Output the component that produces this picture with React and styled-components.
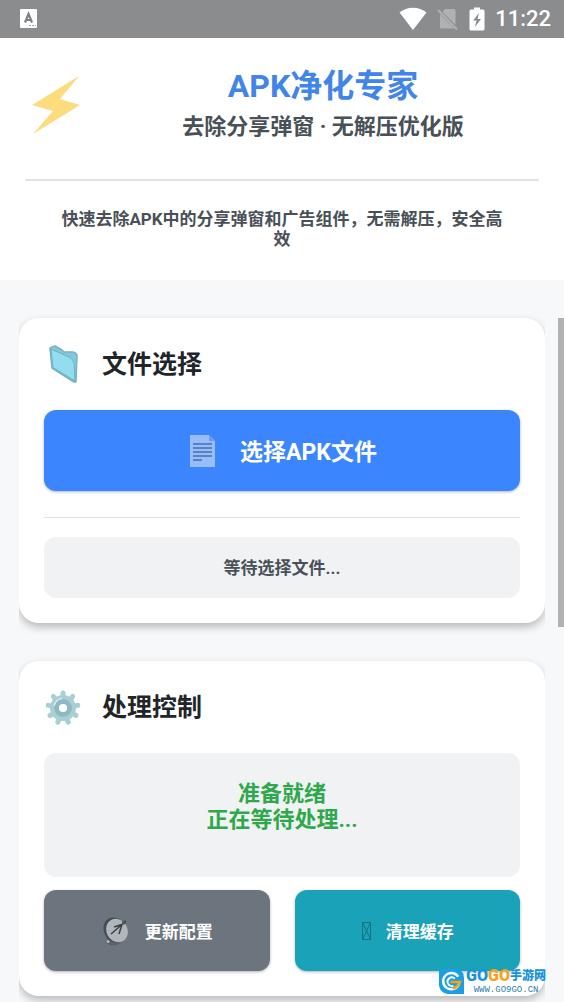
import React from 'react';
import styled, { createGlobalStyle } from 'styled-components';

const GlobalStyle = createGlobalStyle`
* {
    box-sizing: border-box;
    margin: 0;
    padding: 0;
}

body {
    background: #f7f8fa;
    font-family: Roboto, "Noto Sans CJK SC", sans-serif;
    font-weight: 700;
}

svg {
    display: block;
    flex: none;
}
`

const gearTeeth = [0, 40, 80, 120, 160, 200, 240, 280, 320];

const AppIcon = () => (
    <svg width="18" height="20" viewBox="0 0 18 20">
        <rect x="0" y="0" width="17" height="19" rx="1" fill="#fff" />
        <path d="M5 13.500 L8.500 5 L12 13.500 M6 11 H11" fill="none" stroke="#7f8082" strokeWidth="2.200" />
        <path d="M9 16.500 H16" stroke="#a5a6a8" strokeDasharray="2 1" />
    </svg>
);

const WifiIcon = () => (
    <svg width="28" height="24" viewBox="0 0 28 24">
        <path d="M14 23 L0.500 5.500 C8 -0.800 20 -0.800 27.500 5.500 Z" fill="#fff" />
    </svg>
);

const NoSimIcon = () => (
    <svg width="22" height="24" viewBox="0 0 22 24">
        <path d="M8 2 H17 Q18.500 2 18.500 3.500 V18 L5.500 5 Z M3 7 L17.500 21.500 H4 Q3 21.500 3 20.500 Z" fill="#b0b1b2" />
        <path d="M1 3 L20 22.500" stroke="#b0b1b2" strokeWidth="1.800" />
    </svg>
);

const BatteryIcon = () => (
    <svg width="16" height="24" viewBox="0 0 16 24">
        <path d="M5 0.500 H11 V2.500 H14 Q15.500 2.500 15.500 4 V22 Q15.500 23.500 14 23.500 H2 Q0.500 23.500 0.500 22 V4 Q0.500 2.500 2 2.500 H5 Z" fill="#fff" />
        <path d="M10 6 L4 13.500 H7.500 L6 20 L12 12 H8.500 Z" fill="#8b8c8e" />
    </svg>
);

const BoltIcon = () => (
    <svg width="62" height="60" viewBox="0 0 62 60">
        <path d="M54 2 L35 25 L55 31 L8 60 L28 37 L7 31 Z" fill="#fcdc7d" />
    </svg>
);

const FolderIcon = () => (
    <svg width="38" height="42" viewBox="0 0 38 42">
        <path d="M6 5 L11 3 L18 7 L20 9 L29 9 Q33 10 33 13 L32 39 L30 39 L8 25 Z" fill="#7fc9dc" stroke="#7fb0bf" strokeWidth="1.500" strokeLinejoin="round" />
        <path d="M7 6 L25 14 Q29 16 30 20 L31 38 L9 24.500 Z" fill="#92ddf0" stroke="#72afc2" />
    </svg>
);

const GearIcon = () => (
    <svg width="38" height="42" viewBox="0 0 38 42">
        <g stroke="#a8cfd3" strokeWidth="5" strokeLinecap="round">
            {gearTeeth.map((a) => (
                <path key={a} d="M19 12 V7" transform={`rotate(${a} 19 22)`} />
            ))}
        </g>
        <circle cx="19" cy="22" r="13" fill="#a8cfd3" />
        <circle cx="19" cy="22" r="6.500" fill="none" stroke="#8fb9c0" strokeWidth="5" />
        <path d="M10 20 Q12 13 18 12.500" fill="none" stroke="#d5eaec" strokeWidth="1.500" />
        <circle cx="19" cy="22" r="4" fill="#fff" />
    </svg>
);

const DocIcon = () => (
    <svg width="33" height="34" viewBox="0 0 33 34">
        <path d="M3 2 H22 L28 8 V34 H3 Z" fill="#98bdf9" />
        <path d="M22 2 V8 H28 Z" fill="#6f9ce6" />
        <path d="M6 11 H25 M6 15 H25 M6 19 H25 M6 23 H25 M6 27 H15" stroke="#476eb4" strokeWidth="1.500" />
    </svg>
);

const DishIcon = () => (
    <svg width="30" height="32" viewBox="0 0 30 32">
        <path d="M6 22 L5 28 Q12 33 20 28 L17 23 Z" fill="#59616a" />
        <ellipse cx="14" cy="15" rx="11" ry="13" transform="rotate(-30 14 15)" fill="#434b53" />
        <ellipse cx="16" cy="15.500" rx="10.500" ry="12" transform="rotate(-30 16 15.500)" fill="#b1b6ba" />
        <path d="M10 19 L25 6 M13 12 L21 9.500 L18 19" fill="none" stroke="#394047" strokeWidth="1.500" />
        <circle cx="23" cy="7.500" r="2" fill="#4d555d" />
        <circle cx="7" cy="26.500" r="1.500" fill="#b1b6ba" />
    </svg>
);

const MissingIcon = () => (
    <svg width="11" height="20" viewBox="0 0 11 20">
        <path d="M1.500 1.500 H9.500 V18.500 H1.500 Z L9.500 18.500 M9.500 1.500 L1.500 18.500" fill="none" stroke="#11747f" />
    </svg>
);

const LogoIcon = () => (
    <svg width="25" height="25" viewBox="0 0 26 26">
        <path d="M0 0 H18 Q26 1 26 9 V26 H9 Q1 25 0 17 Z" fill="#1b9ee2" />
        <path d="M20 8 A8.500 8.500 0 1 0 21 15" fill="none" stroke="#fff" strokeWidth="2.500" />
        <path d="M16.500 10 A4.500 4.500 0 1 0 15 17.500" fill="none" stroke="#fff" strokeWidth="2" />
        <path d="M12 13.500 H22 Q20 19 14 20" fill="none" stroke="#f7a21b" strokeWidth="2.500" />
    </svg>
);

const App = () => {
    return (
        <Page>
            <GlobalStyle />

            <StatusBar>
                <AppIcon />
                <StatusIcons>
                    <WifiIcon />
                    <NoSimIcon />
                    <BatteryIcon />
                    <Time>11:22</Time>
                </StatusIcons>
            </StatusBar>

            <Header>
                <HeaderRow>
                    <BoltIcon />
                    <Titles>
                        <Title>APK净化专家</Title>
                        <Subtitle>去除分享弹窗 · 无解压优化版</Subtitle>
                    </Titles>
                </HeaderRow>
                <Divider $size={2} />
                <Description>快速去除APK中的分享弹窗和广告组件，无需解压，安全高效</Description>
            </Header>

            <Content>
                <Cards>
                    <Card>
                        <CardTitle><FolderIcon /><span>文件选择</span></CardTitle>
                        <Button $large $color="#3b86ff"><DocIcon />选择APK文件</Button>
                        <FileDivider $size={1} />
                        <FileInfo>等待选择文件...</FileInfo>
                    </Card>

                    <Card>
                        <CardTitle><GearIcon /><span>处理控制</span></CardTitle>
                        <Progress>准备就绪<br />正在等待处理...</Progress>
                        <Actions>
                            <Button $color="#6c757d"><DishIcon />更新配置</Button>
                            <Button $color="#1aa2b8"><MissingIcon />清理缓存</Button>
                        </Actions>
                    </Card>
                </Cards>
                <ScrollThumb />
            </Content>

            <Watermark>
                <LogoIcon />
                <div>
                    <Brand><span>GO</span><Orange>GO</Orange><BrandName>手游网</BrandName></Brand>
                    <Site>WWW.GO9GO.CN</Site>
                </div>
            </Watermark>
        </Page>
    );
}

export default App;

const Page = styled.div`
    position: relative;
    min-height: 100vh;
    overflow: hidden;
`

const StatusBar = styled.div`
    display: flex;
    align-items: center;
    justify-content: space-between;
    height: 38px;
    padding: 0 13px 0 20px;
    background: #8b8c8e;
`

const StatusIcons = styled.div`
    display: flex;
    align-items: center;
    gap: 10px;
`

const Time = styled.span`
    color: #fff;
    font-size: 22px;
    font-weight: 500;
    line-height: 26px;
`

const Header = styled.header`
    padding: 29px 25px 32px;
    background: #fff;
`

const HeaderRow = styled.div`
    display: flex;
    align-items: center;
    gap: 20px;
    padding-bottom: 39px;
`

const Titles = styled.div`
    flex: 1;
    text-align: center;
`

const Title = styled.h1`
    color: #4285e8;
    font-size: 32px;
    line-height: 38px;
`

const Subtitle = styled.h2`
    margin-top: 9px;
    color: #495057;
    font-size: 22px;
    line-height: 26px;
`

const Divider = styled.hr`
    height: ${(props) => props.$size}px;
    border: 0;
    background: #e1e2e4;
`

const Description = styled.p`
    padding: 28px 31px 0;
    margin-bottom: -1px;
    color: #495057;
    font-size: 17px;
    line-height: 20px;
    text-align: center;
`

const Content = styled.main`
    position: relative;
    padding: 38px 19px 0;
`

const Cards = styled.div`
    display: flex;
    flex-direction: column;
    gap: 38px;
    padding-bottom: 6px;
    overflow-x: clip;
`

const Card = styled.section`
    padding: 25px;
    border-radius: 20px;
    background: #fff;
    box-shadow: 0 4px 8px rgba(0, 0, 0, 0.26);
`

const CardTitle = styled.h3`
    display: flex;
    align-items: center;
    gap: 20px;
    margin-bottom: 25px;
    color: #212529;
    font-size: 25px;
    line-height: 40px;

    span {
        padding-top: 2px;
    }
`

const Button = styled.button`
    display: flex;
    flex: 1;
    align-items: center;
    justify-content: center;
    gap: ${(props) => (props.$large ? 20 : 14)}px;
    width: 100%;
    height: 81px;
    padding-bottom: ${(props) => (props.$large ? 2 : 0)}px;
    border: 0;
    border-radius: 12px;
    background: ${(props) => props.$color};
    box-shadow: 0 1px 3px rgba(0, 0, 0, 0.3);
    color: #fff;
    font-family: inherit;
    font-size: ${(props) => (props.$large ? 23 : 17)}px;
    font-weight: 700;
`

const FileDivider = styled(Divider)`
    margin: 26px 0 19px;
`

const FileInfo = styled.p`
    padding: 21px 20px 19px;
    border-radius: 12px;
    background: #f1f2f4;
    color: #495057;
    font-size: 17px;
    line-height: 21px;
    text-align: center;
`

const Progress = styled.p`
    padding: 28px 25px 44px;
    border-radius: 12px;
    background: #f1f2f4;
    color: #2fa84c;
    font-size: 22px;
    line-height: 26px;
    text-align: center;
`

const Actions = styled.div`
    display: flex;
    gap: 25px;
    margin-top: 13px;
`

const ScrollThumb = styled.div`
    position: absolute;
    top: 38px;
    right: 0;
    width: 6px;
    height: 309px;
    background: #b1b2b2;
`

const Watermark = styled.div`
    position: absolute;
    right: 18px;
    bottom: 7px;
    display: flex;
    align-items: center;
    gap: 2px;
`

const Brand = styled.div`
    display: flex;
    align-items: center;
    color: #1792dc;
    font-size: 16px;
    font-weight: 900;
    line-height: 18px;
`

const Orange = styled.span`
    color: #f7a21b;
`

const BrandName = styled.span`
    font-size: 12px;
`

const Site = styled.div`
    color: #2c7fa8;
    font-family: "Liberation Mono", monospace;
    font-size: 9px;
    font-weight: 400;
    line-height: 10px;
    text-align: center;
`
